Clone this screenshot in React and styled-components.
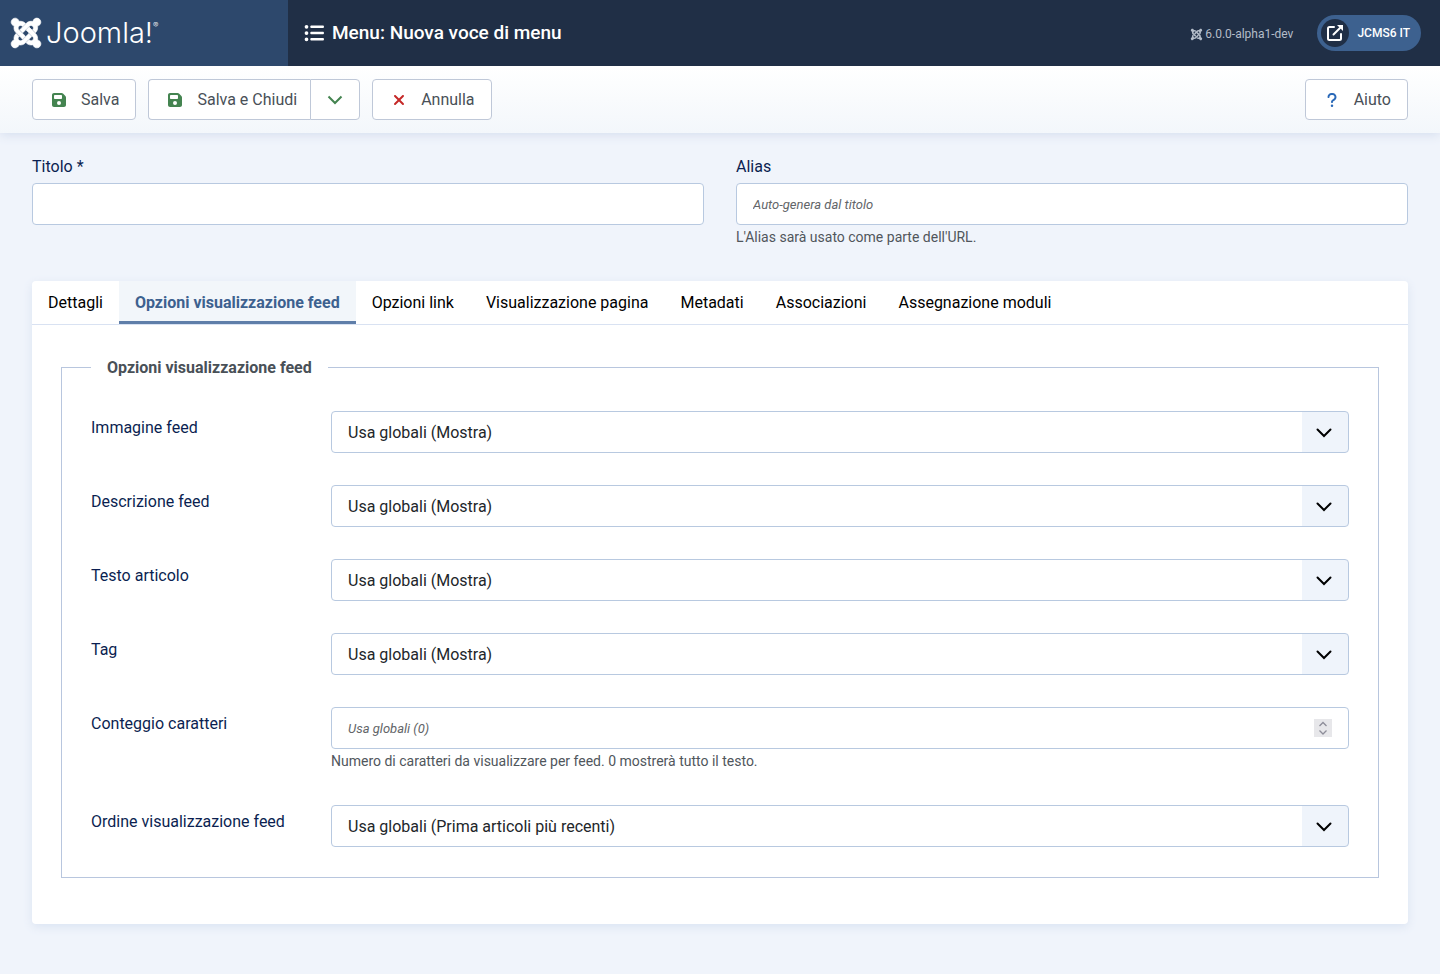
import React from 'react';
import styled, { createGlobalStyle } from 'styled-components';
import { FaJoomla } from 'react-icons/fa';
import { FaFloppyDisk, FaListUl, FaXmark, FaQuestion } from 'react-icons/fa6';

const GlobalStyle = createGlobalStyle`
  *, *::before, *::after { box-sizing: border-box; }
  body {
    margin: 0;
    background: #f0f4fb;
    color: #22262a;
    font: 400 16px/24px Roboto, "Liberation Sans", sans-serif;
  }
  button, input, select { font: inherit; color: inherit; }
`;

const Header = styled.header`
  position: relative;
  z-index: 1;
  display: flex;
  align-items: stretch;
  height: 66px;
  background: #202f46;
  color: #fff;
`;

const Brand = styled.a`
  display: flex;
  align-items: center;
  gap: 3px;
  flex: 0 0 288px;
  padding: 0 9px;
  background: #2d486c;
  color: #fff;
  text-decoration: none;
`;

const Wordmark = styled.span`
  display: flex;
  align-items: flex-start;
  font: 300 29px/32px Inter, "DejaVu Sans", sans-serif;
`;

const Registered = styled.span`
  font-size: 8px;
  line-height: 16px;
`;

const PageTitle = styled.h1`
  display: flex;
  align-items: center;
  gap: 8px;
  flex: 1;
  margin: 0;
  padding-left: 16px;
  font-size: 19px;
  font-weight: 500;
`;

const HeaderItems = styled.div`
  display: flex;
  align-items: center;
  gap: 24px;
  padding-right: 19px;
`;

const Version = styled.div`
  display: flex;
  align-items: center;
  gap: 2px;
  padding-top: 2px;
  color: #b4bdc9;
  font-size: 12px;
`;

const SiteLink = styled.a`
  display: flex;
  align-items: center;
  gap: 8px;
  height: 36px;
  padding: 0 11px 0 4px;
  border-radius: 18px;
  background: #3d618f;
  color: #fff;
  font-size: 12px;
  font-weight: 500;
  text-decoration: none;
`;

const SiteIcon = styled.span`
  display: grid;
  place-items: center;
  width: 28px;
  height: 28px;
  border-radius: 50%;
  background: #202f46;
`;

const Toolbar = styled.div`
  display: flex;
  justify-content: space-between;
  padding: 13px 32px;
  background: linear-gradient(#fff, #f3f7fb);
  box-shadow: 0 2px 10px #d5deee;
`;

const ButtonSet = styled.div`
  display: flex;
  gap: 12px;
`;

const Split = styled.div`
  display: flex;
`;

const ToolButton = styled.button`
  display: flex;
  align-items: center;
  gap: 12px;
  height: 41px;
  padding: 0 ${(p) => (p.$side === 'left' ? 13 : 16)}px 0 16px;
  border: 1px solid #bfc8d8;
  border-right-width: ${(p) => (p.$side === 'left' ? 0 : 1)}px;
  border-radius: ${(p) => (p.$side === 'left' ? '4px 0 0 4px' : '4px')};
  background: #fff;
  color: #495057;
`;

const ToggleButton = styled.button`
  display: grid;
  place-items: center;
  width: 50px;
  height: 41px;
  padding: 0;
  border: 1px solid #bfc8d8;
  border-radius: 0 4px 4px 0;
  background: #fff;
  color: #448450;
`;

const ToolIcon = styled.span`
  display: grid;
  place-items: center;
  width: 20px;
  color: ${(p) => p.$color};
`;

const Main = styled.main`
  padding: 22px 32px 50px;
`;

const TitleRow = styled.div`
  display: grid;
  grid-template-columns: 1fr 1fr;
  gap: 32px;
  margin-bottom: 32px;
`;

const StackedField = styled.div`
  display: flex;
  flex-direction: column;
`;

const Label = styled.label`
  color: #0b1f51;
`;

const StackedLabel = styled(Label)`
  margin-bottom: 4px;
`;

const TextInput = styled.input`
  width: 100%;
  height: 42px;
  padding: 0 16px;
  border: 1px solid #b8c9e0;
  border-radius: 4px;
  background: #fff;
  font-size: ${(p) => (p.placeholder ? 13 : 16)}px;
  appearance: textfield;
  &::placeholder {
    color: #626568;
    font-style: italic;
    opacity: 1;
  }
  &::-webkit-inner-spin-button { display: none; }
`;

const Hint = styled.small`
  height: 24px;
  color: #50565c;
  font-size: 14px;
  line-height: 24px;
`;

const Card = styled.section`
  border-radius: 4px;
  background: #fff;
  box-shadow: 0 3px 10px #dbe4f2;
`;

const Tabs = styled.div`
  display: flex;
  border-bottom: 1px solid #d9e2f2;
`;

const Tab = styled.button`
  height: 43px;
  padding: 0 16px;
  border: 0;
  border-radius: ${(p) => (p.$active ? 0 : '4px')};
  background: ${(p) => (p.$active ? '#f2f6fa' : 'transparent')};
  box-shadow: ${(p) => (p.$active ? 'inset 0 -3px #5f7ea9' : 'none')};
  color: ${(p) => (p.$active ? '#3d618f' : '#000')};
  font-weight: ${(p) => (p.$active ? 700 : 400)};
`;

const Panel = styled.div`
  padding: 29px 29px 46px;
`;

const Options = styled.fieldset`
  display: flex;
  flex-direction: column;
  gap: 32px;
  min-width: 0;
  margin: 0;
  padding: 31px 29px 30px;
  border: 1px solid #b8c6de;
`;

const Legend = styled.legend`
  padding: 2px 16px 0;
  color: #495057;
  font-weight: 700;
`;

const Row = styled.div`
  display: grid;
  grid-template-columns: 240px 1fr;
`;

const RowLabel = styled(Label)`
  padding-top: 5px;
`;

const Control = styled.div`
  display: flex;
  flex-direction: column;
`;

const ControlBox = styled.div`
  position: relative;
`;

const Select = styled.select`
  display: block;
  width: 100%;
  height: 42px;
  padding: 2px 62px 0 16px;
  border: 1px solid #b8c9e0;
  border-radius: 4px;
  background: linear-gradient(#eff4fb, #eff4fb) right / 46px 100% no-repeat #fff;
  appearance: none;
`;

const SelectArrow = styled.svg`
  position: absolute;
  top: 17px;
  right: 17px;
  pointer-events: none;
`;

const Spinner = styled.svg`
  position: absolute;
  top: 12px;
  right: 17px;
  background: #e7e7ea;
  pointer-events: none;
`;

const tabs = [
  'Dettagli',
  'Opzioni visualizzazione feed',
  'Opzioni link',
  'Visualizzazione pagina',
  'Metadati',
  'Associazioni',
  'Assegnazione moduli',
];

const shown = 'Usa globali (Mostra)';
const fields = [
  { id: 'image', label: 'Immagine feed', value: shown },
  { id: 'description', label: 'Descrizione feed', value: shown },
  { id: 'text', label: 'Testo articolo', value: shown },
  { id: 'tags', label: 'Tag', value: shown },
  {
    id: 'count',
    label: 'Conteggio caratteri',
    placeholder: 'Usa globali (0)',
    hint: 'Numero di caratteri da visualizzare per feed. 0 mostrerà tutto il testo.',
  },
  { id: 'order', label: 'Ordine visualizzazione feed', value: 'Usa globali (Prima articoli più recenti)' },
];

function ExternalIcon() {
  return (
    <svg width="18" height="18" viewBox="0 0 18 18" fill="none" stroke="#fff" strokeWidth="2" aria-hidden="true">
      <path d="M8 3H3.5Q2 3 2 4.500V14.500Q2 16 3.500 16H13.500Q15 16 15 14.500V10" strokeLinecap="round" />
      <path d="M7.500 10.500L14 4" strokeLinecap="round" />
      <path d="M11 1H17V7Z" fill="#fff" stroke="none" />
    </svg>
  );
}

function SelectField({ id, value }) {
  return (
    <ControlBox>
      <Select id={id} defaultValue={value}>
        <option>{value}</option>
      </Select>
      <SelectArrow width="16" height="10" viewBox="0 0 16 10" fill="none" aria-hidden="true">
        <path d="M1.500 1.500L8 8L14.500 1.500" stroke="#000" strokeWidth="2" strokeLinecap="round" />
      </SelectArrow>
    </ControlBox>
  );
}

function NumberField({ id, placeholder }) {
  return (
    <ControlBox>
      <TextInput id={id} type="number" placeholder={placeholder} />
      <Spinner width="18" height="18" viewBox="0 0 18 18" fill="none" aria-hidden="true">
        <path d="M5.500 7L9 3.500L12.500 7M5.500 11.500L9 15L12.500 11.500" stroke="#8d8d99" strokeWidth="1.300" />
      </Spinner>
    </ControlBox>
  );
}

function ToolbarAction({ icon, color, side, children }) {
  return (
    <ToolButton type="button" $side={side}>
      <ToolIcon $color={color}>{icon}</ToolIcon>
      {children}
    </ToolButton>
  );
}

export default function App() {
  return (
    <>
      <GlobalStyle />
      <Header>
        <Brand href="#">
          <FaJoomla size={34} strokeWidth={10} overflow="visible" aria-hidden="true" />
          <Wordmark>
            Joomla!<Registered>®</Registered>
          </Wordmark>
        </Brand>
        <PageTitle>
          <FaListUl size={20} aria-hidden="true" />
          Menu: Nuova voce di menu
        </PageTitle>
        <HeaderItems>
          <Version>
            <FaJoomla size={13} aria-hidden="true" />
            6.0.0-alpha1-dev
          </Version>
          <SiteLink href="#">
            <SiteIcon>
              <ExternalIcon />
            </SiteIcon>
            JCMS6 IT
          </SiteLink>
        </HeaderItems>
      </Header>
      <Toolbar>
        <ButtonSet>
          <ToolbarAction icon={<FaFloppyDisk size={16} />} color="#448450">Salva</ToolbarAction>
          <Split>
            <ToolbarAction icon={<FaFloppyDisk size={16} />} color="#448450" side="left">
              Salva e Chiudi
            </ToolbarAction>
            <ToggleButton type="button" aria-label="Altre azioni di salvataggio">
              <svg width="16" height="10" viewBox="0 0 16 10" fill="none" aria-hidden="true">
                <path d="M1.500 1.500L8 8L14.500 1.500" stroke="currentColor" strokeWidth="2" />
              </svg>
            </ToggleButton>
          </Split>
          <ToolbarAction icon={<FaXmark size={16} />} color="#c52827">Annulla</ToolbarAction>
        </ButtonSet>
        <ToolbarAction icon={<FaQuestion size={16} />} color="#2a69b8">Aiuto</ToolbarAction>
      </Toolbar>
      <Main>
        <TitleRow>
          <StackedField>
            <StackedLabel htmlFor="title">Titolo *</StackedLabel>
            <TextInput id="title" type="text" required />
          </StackedField>
          <StackedField>
            <StackedLabel htmlFor="alias">Alias</StackedLabel>
            <TextInput id="alias" type="text" placeholder="Auto-genera dal titolo" />
            <Hint>L'Alias sarà usato come parte dell'URL.</Hint>
          </StackedField>
        </TitleRow>
        <Card>
          <Tabs role="tablist">
            {tabs.map((name, i) => (
              <Tab key={name} type="button" role="tab" aria-selected={i === 1} $active={i === 1}>
                {name}
              </Tab>
            ))}
          </Tabs>
          <Panel role="tabpanel">
            <Options>
              <Legend>Opzioni visualizzazione feed</Legend>
              {fields.map((f) => (
                <Row key={f.id}>
                  <RowLabel htmlFor={f.id}>{f.label}</RowLabel>
                  <Control>
                    {f.value ? <SelectField {...f} /> : <NumberField {...f} />}
                    {f.hint && <Hint>{f.hint}</Hint>}
                  </Control>
                </Row>
              ))}
            </Options>
          </Panel>
        </Card>
      </Main>
    </>
  );
}
